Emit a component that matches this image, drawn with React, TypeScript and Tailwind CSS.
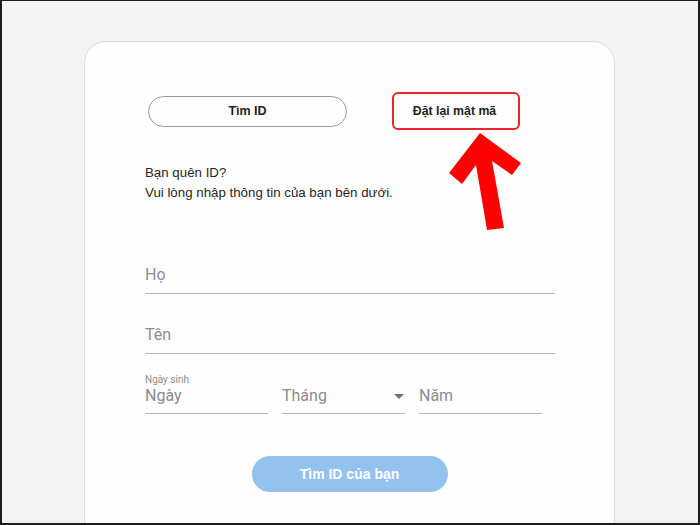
function Field({ label, className = '' }: { label: string; className?: string }) {
  return (
    <div className={`border-b border-[#b5b5b5] pb-2 ${className}`}>
      <div className="text-[16px] leading-[20px] text-[#8c8c8c] font-['Roboto',sans-serif]">{label}</div>
    </div>
  );
}

export default function App() {
  return (
    <div className="relative w-[700px] h-[525px] overflow-hidden bg-[#f3f3f3] border-t border-x-2 border-b-2 border-[#1c1c1c] font-['Liberation_Sans',Arial,sans-serif]">
      <div className="ml-[82px] mt-[40px] w-[531px] h-[500px] rounded-[22px] border border-[#dcdcdc] bg-[#fefefe] px-[60px] pt-[54px]">
        {/* tabs */}
        <div className="flex gap-[8px] pl-[3px]">
          <button className="w-[199px] h-[31px] rounded-full border border-[#9a9a9a] text-[12.5px] font-bold text-[#222]">
            Tìm ID
          </button>
          <div className="relative w-[199px] h-[31px] flex items-center justify-center text-[12.3px] font-bold text-[#222]">
            Đặt lại mật mã
            <div className="absolute left-[37px] top-[-4px] w-[128px] h-[38px] rounded-[6px] border-2 border-[#e8262b]" />
          </div>
        </div>

        <p className="mt-[36px] text-[13.3px] leading-[20px] text-[#262626]">
          Bạn quên ID?
          <br />
          Vui lòng nhập thông tin của bạn bên dưới.
        </p>

        <Field label="Họ" className="mt-[62px] w-[410px]" />
        <Field label="Tên" className="mt-[31px] w-[410px]" />

        <div className="mt-[20px] text-[10px] leading-[12px] text-[#8c8c8c] font-['Roboto',sans-serif]">Ngày sinh</div>
        <div className="flex gap-[14px]">
          <div className="w-[123px] border-b border-[#b5b5b5] pb-[7px]">
            <div className="text-[16px] leading-[20px] text-[#8c8c8c] font-['Roboto',sans-serif]">Ngày</div>
          </div>
          <div className="w-[123px] border-b border-[#b5b5b5] pb-[7px] flex items-center justify-between">
            <div className="text-[16px] leading-[20px] text-[#8c8c8c] font-['Roboto',sans-serif]">Tháng</div>
            <svg width="10" height="6" viewBox="0 0 10 6" className="mr-[1px] mt-[1px]">
              <path d="M0 0 L10 0 L5 5 Z" fill="#757575" />
            </svg>
          </div>
          <div className="w-[123px] border-b border-[#b5b5b5] pb-[7px]">
            <div className="text-[16px] leading-[20px] text-[#8c8c8c] font-['Roboto',sans-serif]">Năm</div>
          </div>
        </div>

        <div className="mt-[42px] flex justify-center">
          <button className="w-[196px] h-[36px] rounded-full bg-[#94c2ef] text-[14px] font-bold text-white">
            Tìm ID của bạn
          </button>
        </div>
      </div>

      {/* red annotation arrow */}
      <svg className="absolute left-0 top-0 pointer-events-none" width="700" height="525">
        <polygon
          points="478,132 519,162 510,174 490,160 502,227 485,229 474,164 460,183 447,172"
          fill="#ff0000"
        />
      </svg>
    </div>
  );
}
